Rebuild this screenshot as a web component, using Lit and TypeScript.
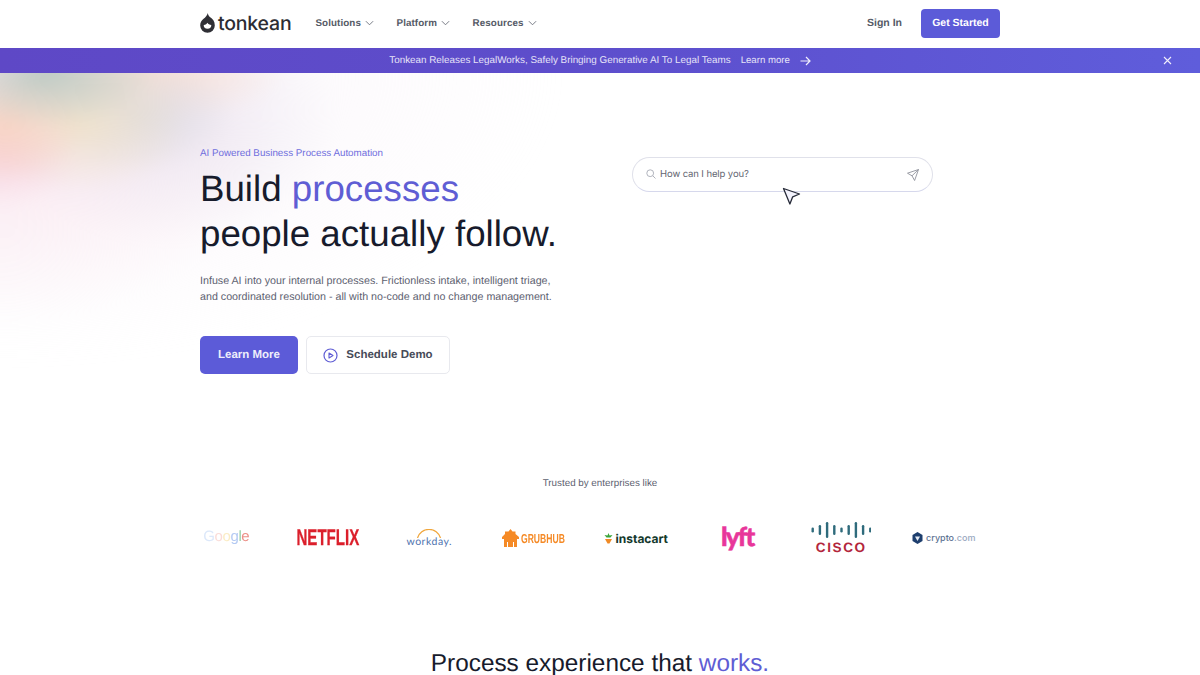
import { LitElement, html, css, svg } from "lit";
import { customElement } from "lit/decorators.js";

const chevron = html`<svg class="chev" viewBox="0 0 10 6" width="9" height="6"><path d="M1 1l4 4 4-4" fill="none" stroke="currentColor" stroke-width="1" /></svg>`;

const NAV = ["Solutions", "Platform", "Resources"];

const CISCO_BARS = [5, 10, 16, 10, 5, 10, 16, 10, 5];

@customElement("app-root")
export class AppRoot extends LitElement {
  static styles = css`
    :host {
      display: block;
      height: 675px;
      overflow: hidden;
      background: #fff;
      font-family: "Liberation Sans", Arial, sans-serif;
      color: #171b2c;
      text-rendering: geometricPrecision;
    }

    .wrap {
      width: 800px;
      margin: 0 auto;
    }

    header .wrap {
      height: 48px;
      box-sizing: border-box;
      padding-bottom: 2px;
      display: flex;
      align-items: center;
    }

    .brand {
      display: flex;
      align-items: center;
      gap: 3px;
      font-family: "Inter", sans-serif;
      font-size: 19.5px;
      font-weight: 500;
      letter-spacing: -0.2px;
      color: #2c2c33;
      margin-right: 24px;
    }

    nav {
      display: flex;
      gap: 22.5px;
    }

    nav a {
      display: flex;
      align-items: center;
      gap: 4px;
      font-size: 9.8px;
      font-weight: 700;
      letter-spacing: 0.1px;
      color: #555a66;
    }

    .chev {
      color: #6a6e79;
    }

    .actions {
      margin-left: auto;
      display: flex;
      align-items: center;
      gap: 19px;
    }

    .signin {
      font-size: 10.5px;
      font-weight: 700;
      color: #555a66;
    }

    .started {
      width: 79px;
      height: 29px;
      box-sizing: border-box;
      border-radius: 4px;
      background: #5c5bd8;
      color: #fff;
      font-size: 10.5px;
      font-weight: 700;
      display: flex;
      align-items: center;
      justify-content: center;
    }

    .banner {
      height: 25px;
      position: relative;
      display: flex;
      align-items: center;
      justify-content: center;
      gap: 10px;
      background: linear-gradient(90deg, #5e48c6 0%, #5d4dcb 45%, #5f5ddb 100%);
      color: #e6e3f8;
      font-size: 9.87px;
    }

    .banner .more {
      display: flex;
      align-items: center;
      gap: 10px;
      font-size: 9.6px;
    }

    .close {
      position: absolute;
      left: 1163px;
      top: 8px;
    }

    .hero {
      position: relative;
      height: 602px;
      overflow: hidden;
    }

    .glow {
      position: absolute;
      left: -40px;
      top: -40px;
      width: 700px;
      height: 440px;
      filter: blur(7px);
      background:
        radial-gradient(110px 55px at 85px 40px, rgba(175, 195, 188, 0.8), transparent),
        radial-gradient(85px 60px at 40px 90px, rgba(248, 205, 180, 0.65), transparent),
        radial-gradient(80px 50px at 40px 125px, rgba(245, 195, 208, 0.5), transparent),
        radial-gradient(110px 70px at 120px 90px, rgba(241, 226, 195, 0.75), transparent),
        radial-gradient(100px 60px at 175px 80px, rgba(214, 215, 220, 0.7), transparent),
        radial-gradient(140px 50px at 190px 40px, rgba(248, 222, 208, 0.85), transparent),
        radial-gradient(170px 120px at 210px 90px, rgba(228, 222, 236, 0.6), transparent),
        radial-gradient(280px 190px at 40px 100px, rgba(250, 225, 234, 0.7), transparent),
        radial-gradient(560px 290px at 40px 40px, rgba(246, 237, 246, 0.65), transparent);
    }

    .hero-main {
      position: relative;
      display: flex;
      justify-content: space-between;
      padding-top: 74px;
    }

    .copy {
      width: 400px;
    }

    .eyebrow {
      font-size: 9.8px;
      line-height: 13px;
      color: #6f6ddd;
    }

    h1 {
      margin: 6px 0 0;
      font-size: 36.7px;
      line-height: 45px;
      font-weight: 400;
      color: #171b2c;
    }

    h1 em,
    h2 em {
      font-style: normal;
      color: #5f5dd4;
    }

    .sub {
      margin: 17px 0 0;
      font-size: 10.7px;
      line-height: 16px;
      color: #5d6170;
    }

    .cta {
      display: flex;
      gap: 8px;
      margin-top: 31px;
    }

    .btn {
      height: 38px;
      box-sizing: border-box;
      border-radius: 5px;
      font-size: 11.5px;
      font-weight: 700;
      display: flex;
      align-items: center;
      justify-content: center;
    }

    .btn.primary {
      width: 98px;
      background: #5c5bd8;
      color: #eeeefb;
    }

    .btn.ghost {
      width: 144px;
      gap: 8px;
      background: #fff;
      border: 1px solid #e8e9ee;
      color: #474b58;
    }

    .ask {
      position: relative;
      width: 301px;
      height: 35px;
      box-sizing: border-box;
      margin: 10px 67px 0 0;
      padding: 0 13px;
      border: 1px solid #e0e1ea;
      border-bottom-color: #d6d8ec;
      border-radius: 18px;
      background: #fff;
      display: flex;
      align-items: center;
      gap: 4px;
      font-family: "Inter", sans-serif;
      font-size: 9.5px;
      letter-spacing: -0.1px;
      color: #62656f;
    }

    .ask .find {
      margin-top: -2px;
    }

    .ask .send {
      margin-left: auto;
    }

    .cursor {
      position: absolute;
      left: 149px;
      top: 29px;
    }

    .trusted {
      position: relative;
      margin-top: 103px;
      text-align: center;
      font-size: 9.8px;
      line-height: 13px;
      color: #5d6170;
    }

    .logos {
      position: relative;
      width: 820px;
      height: 40px;
      margin: 28px 0 0 175px;
      display: grid;
      grid-template-columns: repeat(8, 1fr);
      align-items: center;
      justify-items: center;
    }

    .logo {
      display: flex;
      align-items: center;
      white-space: nowrap;
    }

    .google {
      margin-bottom: 4px;
      font-size: 15px;
      letter-spacing: -0.4px;
      filter: blur(0.3px);
    }

    .netflix {
      margin-right: 1px;
      font-size: 22.5px;
      font-weight: 700;
      color: #db1f2b;
      -webkit-text-stroke: 0.3px #db1f2b;
      transform: scaleX(0.67);
    }

    .workday {
      flex-direction: column;
      margin-right: 4px;
      font-family: "Lato", sans-serif;
      font-size: 10.5px;
      letter-spacing: 0.5px;
      line-height: 9px;
      color: #4f74b0;
    }

    .grubhub {
      gap: 2px;
      font-size: 13px;
      font-weight: 700;
      color: #f58a26;
    }

    .grubhub span {
      display: inline-block;
      width: 44px;
      transform: scaleX(0.66);
      transform-origin: left center;
    }

    .instacart {
      gap: 2px;
      font-family: "Inter", sans-serif;
      font-size: 12px;
      font-weight: 700;
      color: #14392c;
    }

    .lyft {
      margin-bottom: 4px;
      margin-right: 3px;
      font-family: "Lato", sans-serif;
      font-size: 26px;
      font-weight: 900;
      letter-spacing: -1.8px;
      color: #e8369a;
      -webkit-text-stroke: 0.5px #e8369a;
    }

    .cisco {
      flex-direction: column;
      gap: 4px;
      font-size: 13.5px;
      line-height: 12px;
      font-weight: 700;
      letter-spacing: 1.6px;
      color: #b3263c;
    }

    .crypto {
      gap: 3px;
      font-family: "Inter", sans-serif;
      font-size: 9px;
      font-weight: 500;
      color: #5c7192;
    }

    .crypto em {
      font-style: normal;
      color: #9aa8bf;
    }

    h2 {
      position: relative;
      margin: 91px 0 0;
      text-align: center;
      font-size: 24.35px;
      line-height: 30px;
      font-weight: 400;
      color: #171b2c;
    }
  `;

  private cisco() {
    return html`<svg width="60" height="16" viewBox="0 0 60 16">
      ${CISCO_BARS.map((h, i) => {
        return svg`<rect x=${i * 7.2 + 0.5} y=${8 - h / 2} width="2.400" height=${h} rx="1.200" fill="#2f6b7c" />`;
      })}
    </svg>`;
  }

  render() {
    return html`
      <header>
        <div class="wrap">
          <div class="brand">
            <svg width="15" height="20" viewBox="0 0 15 20">
              <path
                d="M7.800 0c.2 1.800 1 3 2.100 4C12.700 5.600 14.800 8.200 14.800 12.500a7.300 7.300 0 0 1-14.600 0C.2 9.400 1.700 7.300 3.600 5.800 5.400 4.400 7.200 2.600 7.800 0z"
                fill="#2f2f35"
              />
              <path d="M3.700 12c2-.2 3.100-.9 3.800-2.200.7 1.400 2 2 3.800 2.200a3.800 3.800 0 0 1-7.600 0z" fill="#fff" />
            </svg>
            tonkean
          </div>
          <nav>${NAV.map((n) => html`<a>${n} ${chevron}</a>`)}</nav>
          <div class="actions">
            <span class="signin">Sign In</span>
            <span class="started">Get Started</span>
          </div>
        </div>
      </header>

      <div class="banner">
        <span>Tonkean Releases LegalWorks, Safely Bringing Generative AI To Legal Teams</span>
        <span class="more">
          Learn more
          <svg width="11" height="10" viewBox="0 0 11 10"><path d="M0.5 5h9.500M6 1l4 4-4 4" fill="none" stroke="#f1effc" stroke-width="1.200" /></svg>
        </span>
        <svg class="close" width="9" height="9" viewBox="0 0 9 9"><path d="M1 1l7 7M8 1l-7 7" stroke="#f1effc" stroke-width="1.100" /></svg>
      </div>

      <section class="hero">
        <div class="glow"></div>
        <div class="wrap hero-main">
          <div class="copy">
            <div class="eyebrow">AI Powered Business Process Automation</div>
            <h1>Build <em>processes</em><br />people actually follow.</h1>
            <p class="sub">
              Infuse AI into your internal processes. Frictionless intake, intelligent triage,<br />
              and coordinated resolution - all with no-code and no change management.
            </p>
            <div class="cta">
              <div class="btn primary">Learn More</div>
              <div class="btn ghost">
                <svg width="15" height="15" viewBox="0 0 15 15">
                  <circle cx="7.500" cy="7.500" r="6.500" fill="none" stroke="#5f5dd4" stroke-width="1.200" />
                  <path d="M6 5v5l4-2.500z" fill="none" stroke="#5f5dd4" stroke-width="1.100" stroke-linejoin="round" />
                </svg>
                Schedule Demo
              </div>
            </div>
          </div>
          <div class="ask">
            <svg class="find" width="10" height="10" viewBox="0 0 10 10">
              <circle cx="4.200" cy="4.200" r="3.400" fill="none" stroke="#b0b3bc" />
              <path d="M6.700 6.700l2.800 2.800" stroke="#b0b3bc" />
            </svg>
            How can I help you?
            <svg class="send" width="12" height="12" viewBox="0 0 12 12">
              <path d="M11.500.5L.5 4.200l4.500 2.600 2.600 4.700zM11.500.5L5 6.800" fill="none" stroke="#8f929c" stroke-width="0.900" stroke-linejoin="round" />
            </svg>
            <svg class="cursor" width="19" height="19" viewBox="0 0 19 19">
              <path d="M1.500 1.500l16 5.500-6.800 2.800-2.800 7.200z" fill="#f3f3fd" stroke="#262a38" stroke-width="1.300" stroke-linejoin="round" />
            </svg>
          </div>
        </div>

        <div class="trusted">Trusted by enterprises like</div>

        <div class="logos">
          <div class="logo google">
            <span style="color:#dce8fa">G</span><span style="color:#fadcd8">o</span><span style="color:#fbecc4">o</span><span style="color:#b4caf3">g</span><span style="color:#98d0a8">l</span><span style="color:#ec9088">e</span>
          </div>
          <div class="logo netflix">NETFLIX</div>
          <div class="logo workday">
            <svg width="26" height="9" viewBox="0 0 26 9"><path d="M1.500 9a12 12 0 0 1 23 0" fill="none" stroke="#f0a63c" stroke-width="1.300" /></svg>
            workday.
          </div>
          <div class="logo grubhub">
            <svg width="17" height="18" viewBox="0 0 17 18">
              <path d="M8.500 0l2 2.500h3v2.500L17 8v2h-2v8h-3v-5h-1v5H6v-5H5v5H2v-8H0V8l3-3V2.500h3.500z" fill="#f58a26" />
            </svg>
            <span>GRUBHUB</span>
          </div>
          <div class="logo instacart">
            <svg width="9" height="11" viewBox="0 0 9 11">
              <path d="M4.500 0l1 2.500L8.500 2 6.500 4.500h-4L.5 2l3 .5z" fill="#3aa53a" />
              <path d="M1 6h7l-2.500 4.500h-2z" fill="#f08a24" />
            </svg>
            instacart
          </div>
          <div class="logo lyft">lyft</div>
          <div class="logo cisco">${this.cisco()} CISCO</div>
          <div class="logo crypto">
            <svg width="11" height="12" viewBox="0 0 11 12">
              <path d="M5.500 0l5 3v6l-5 3-5-3V3z" fill="#1e3f6e" />
              <path d="M3 4.500h5L5.500 9z" fill="#e6ecf5" />
            </svg>
            <span>crypto<em>.com</em></span>
          </div>
        </div>

        <h2>Process experience that <em>works.</em></h2>
      </section>
    `;
  }
}

declare global {
  interface HTMLElementTagNameMap {
    "app-root": AppRoot;
  }
}
